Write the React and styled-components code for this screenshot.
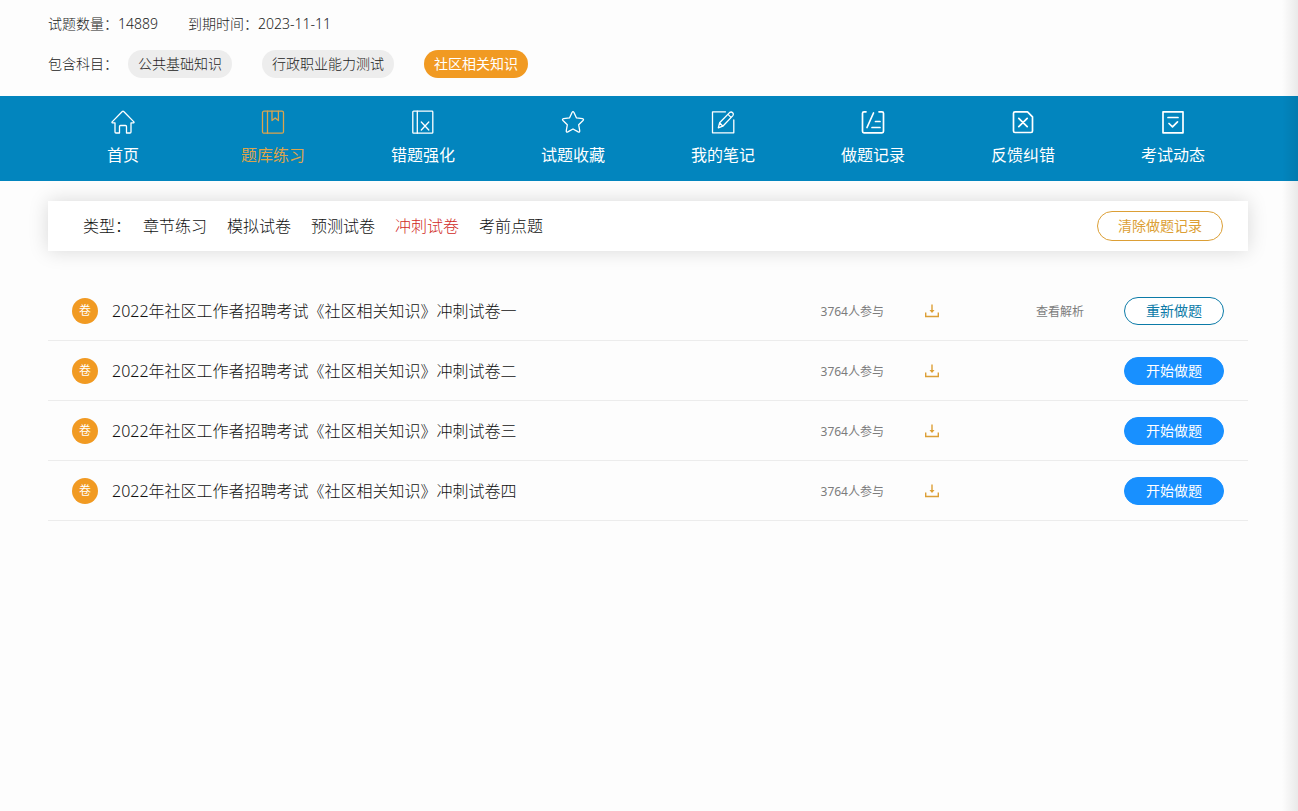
import React from "react";
import styled, { createGlobalStyle, css } from "styled-components";

const COLORS = {
  page: "#fdfdfd",
  text: "#111",
  muted: "#7c7c7c",
  gray: "#ededed",
  line: "#ececec",
  orange: "#f19a22",
  gold: "#dc9f36",
  nav: "#0285be",
  navActive: "#dda44c",
  red: "#d02a26",
  blue: "#1890ff",
  teal: "#0c7ba8",
};

const SUBJECTS = ["公共基础知识", "行政职业能力测试", "社区相关知识"];

const TYPES = ["章节练习", "模拟试卷", "预测试卷", "冲刺试卷", "考前点题"];

const NAV = [
  { id: "home", label: "首页" },
  { id: "book", label: "题库练习" },
  { id: "wrong", label: "错题强化" },
  { id: "star", label: "试题收藏" },
  { id: "note", label: "我的笔记" },
  { id: "record", label: "做题记录" },
  { id: "feedback", label: "反馈纠错" },
  { id: "news", label: "考试动态" },
];

const PAPERS = [
  { no: "一", joined: 3764, done: true },
  { no: "二", joined: 3764, done: false },
  { no: "三", joined: 3764, done: false },
  { no: "四", joined: 3764, done: false },
];

const ICONS = {
  home: (
    <path d="M4 12.800H1.300q-.6-.3-.2-.9L11.300 1.500q.7-.6 1.400 0l10.200 10.400q.4.6-.2.900H20V22q0 1-1 1h-3.500v-6.500q0-1-1-1h-5q-1 0-1 1V23H5q-1 0-1-1Z" />
  ),
  book: (
    <>
      <rect x="1.500" y="1.200" width="21" height="22" rx="1.500" />
      <path d="M6.500 1.200v22M11 1.200v9.300l3.200-2.600 3.200 2.600V1.200" />
    </>
  ),
  wrong: (
    <>
      <rect x="1.800" y="1.200" width="20" height="22" rx=".8" />
      <path d="M6.300 1.200v22M10.300 12l7.500 8M17.800 12l-7.500 8" />
    </>
  ),
  star: (
    <path d="M11 2.500q1-1.700 2 0l2.500 5.400 5.900.8q1.900.4.600 1.800l-4.300 4.300 1 5.900q.2 1.900-1.500 1.200L12 19l-5.200 2.900q-1.700.7-1.500-1.200l1-5.900L2 10.500q-1.300-1.400.6-1.800l5.900-.8Z" />
  ),
  note: (
    <>
      <path d="M14.500 1.800H1.500v21h21.300V10" />
      <path d="m7.300 17.800 1.300-5L18.800 2.400q1.500-1 2.900.3 1.300 1.400.2 2.900L11.800 16.200ZM17 4.400l3 3M8.600 12.800l3.200 3.400" />
    </>
  ),
  record: (
    <path d="M5 1.800H3q-1.500 0-1.500 1.500v18q0 1.500 1.500 1.500h18q1.500 0 1.500-1.500v-18q0-1.500-1.500-1.500h-3M12.500 3 6 17.500M14.500 11.500H19M11 17.500h8" />
  ),
  feedback: (
    <path d="M4 1.800h12.500l5 5V21q0 1.500-1.500 1.500H4q-1.500 0-1.500-1.500V3.300Q2.500 1.800 4 1.800ZM7.800 8.300l8.400 8.400M16.200 8.300l-8.400 8.400" />
  ),
  news: (
    <path d="M2 1.800h20v21H2ZM7 7.500h10M8 13.500l3.500 3.300 5-5" />
  ),
};

// icons that are drawn with a heavier line than the others
const BOLD = ["record", "feedback", "news"];

const NavIcon = ({ id }) => (
  <svg
    width="24"
    height="24"
    viewBox="0 0 24 24"
    fill="none"
    stroke="currentColor"
    strokeWidth={BOLD.includes(id) ? 1.7 : 1.3}
    strokeLinejoin="round"
    strokeLinecap="round"
    aria-hidden="true"
  >
    {ICONS[id]}
  </svg>
);

const DownloadIcon = () => (
  <svg
    width="16"
    height="16"
    viewBox="0 0 16 16"
    fill="none"
    stroke="currentColor"
    strokeWidth="1.4"
    aria-hidden="true"
  >
    <path d="M8 1.500v7M1.700 9.500v4h12.600v-4" />
    <path d="m5.500 7 2.500 3 2.500-3Z" fill="currentColor" stroke="none" />
  </svg>
);

const App = () => {
  const [subject, setSubject] = React.useState("社区相关知识");
  const [type, setType] = React.useState("冲刺试卷");

  return (
    <Page>
      <GlobalStyle />
      <Header>
        <InfoRow>
          <span>试题数量：14889</span>
          <span>到期时间：2023-11-11</span>
        </InfoRow>
        <SubjectRow>
          <SubjectLabel>包含科目：</SubjectLabel>
          <Subjects>
            {SUBJECTS.map((name) => (
              <Subject
                key={name}
                $active={name === subject}
                onClick={() => setSubject(name)}
              >
                {name}
              </Subject>
            ))}
          </Subjects>
        </SubjectRow>
      </Header>

      <Nav>
        {NAV.map(({ id, label }) => (
          <NavLink key={id} href={`#${id}`} $active={id === "book"}>
            <NavIcon id={id} />
            {label}
          </NavLink>
        ))}
      </Nav>

      <Main>
        <FilterBar>
          <span>类型：</span>
          <Types>
            {TYPES.map((name) => (
              <TypeButton
                key={name}
                $active={name === type}
                onClick={() => setType(name)}
              >
                {name}
              </TypeButton>
            ))}
          </Types>
          <ClearButton>清除做题记录</ClearButton>
        </FilterBar>

        <PaperList>
          {PAPERS.map(({ no, joined, done }) => (
            <Paper key={no}>
              <Badge>卷</Badge>
              <Title>2022年社区工作者招聘考试《社区相关知识》冲刺试卷{no}</Title>
              <Note>{joined}人参与</Note>
              <Download aria-label="下载">
                <DownloadIcon />
              </Download>
              <Analysis>{done && <a href="#analysis">查看解析</a>}</Analysis>
              <StartButton $outline={done}>
                {done ? "重新做题" : "开始做题"}
              </StartButton>
            </Paper>
          ))}
        </PaperList>
      </Main>
      <EdgeShade />
    </Page>
  );
};

const GlobalStyle = createGlobalStyle`
  *, *::before, *::after {
    box-sizing: border-box;
  }

  body {
    margin: 0;
    background: ${COLORS.page};
    color: ${COLORS.text};
    font-family: "Noto Sans", "Noto Sans CJK SC", sans-serif;
    font-weight: 300;
    font-size: 16px;
    line-height: 24px;
  }

  button {
    margin: 0;
    padding: 0;
    border: none;
    background: none;
    color: inherit;
    font: inherit;
    cursor: pointer;
  }

  a {
    color: inherit;
    text-decoration: none;
  }
`;

const gutter = css`
  padding-left: 48px;
  padding-right: 50px;
`;

const Page = styled.div`
  position: relative;
  min-height: 100vh;
`;

const Header = styled.header`
  ${gutter}
  padding-top: 10px;
  padding-bottom: 18px;
  font-size: 14px;
  line-height: 28px;
  color: #222;
`;

const InfoRow = styled.div`
  display: flex;
  gap: 30px;
`;

const SubjectRow = styled.div`
  display: flex;
  align-items: center;
  gap: 10px;
  margin-top: 12px;
`;

const SubjectLabel = styled.span`
  flex: none;
`;

const Subjects = styled.div`
  display: flex;
  flex-wrap: wrap;
  gap: 30px;
`;

const Subject = styled.button`
  padding: 0 10px;
  border-radius: 14px;
  background: ${({ $active }) => ($active ? COLORS.orange : COLORS.gray)};
  color: ${({ $active }) => ($active ? "#fff" : "inherit")};
  font-weight: ${({ $active }) => ($active ? 400 : 300)};
`;

const Nav = styled.nav`
  ${gutter}
  display: flex;
  background: ${COLORS.nav};
`;

const NavLink = styled.a`
  flex: 1;
  display: flex;
  flex-direction: column;
  align-items: center;
  gap: 9px;
  padding: 14px 0;
  color: ${({ $active }) => ($active ? COLORS.navActive : "#fff")};
  font-weight: 400;
`;

const Main = styled.main`
  ${gutter}
  padding-top: 20px;
`;

const FilterBar = styled.div`
  display: flex;
  align-items: center;
  gap: 12px;
  height: 50px;
  padding: 0 25px 0 35px;
  background: #fff;
  box-shadow: 0 0 20px rgba(0, 0, 0, 0.15);
`;

const Types = styled.div`
  display: flex;
  gap: 20px;
`;

const TypeButton = styled.button`
  color: ${({ $active }) => ($active ? COLORS.red : "inherit")};
`;

const ClearButton = styled.button`
  width: 126px;
  height: 30px;
  margin-left: auto;
  border: 1px solid ${COLORS.gold};
  border-radius: 15px;
  color: ${COLORS.gold};
  font-size: 14px;
  font-weight: 400;
`;

const PaperList = styled.ul`
  margin: 30px 0 0;
  padding: 0;
  list-style: none;
`;

const Paper = styled.li`
  display: flex;
  align-items: center;
  height: 60px;
  padding: 0 24px;
  border-bottom: 1px solid ${COLORS.line};
`;

const Badge = styled.span`
  flex: none;
  width: 26px;
  margin-right: 14px;
  border-radius: 50%;
  background: ${COLORS.orange};
  color: #fff;
  font-size: 12px;
  font-weight: 400;
  line-height: 26px;
  text-align: center;
`;

const Title = styled.span`
  flex: 1;
`;

const Note = styled.span`
  padding-top: 2px;
  color: ${COLORS.muted};
  font-size: 12px;
  font-weight: 400;
`;

const Download = styled.button`
  display: flex;
  margin-left: 40px;
  color: ${COLORS.gold};
`;

const Analysis = styled(Note)`
  width: 144px;
  margin-right: 40px;
  text-align: right;
`;

const StartButton = styled.button`
  width: 100px;
  height: 28px;
  border: 1px solid ${({ $outline }) => ($outline ? COLORS.teal : COLORS.blue)};
  border-radius: 14px;
  background: ${({ $outline }) => ($outline ? "#fff" : COLORS.blue)};
  color: ${({ $outline }) => ($outline ? COLORS.teal : "#fff")};
  font-size: 14px;
  font-weight: 400;
`;

// soft shade along the right edge of the page
const EdgeShade = styled.div`
  position: absolute;
  top: 0;
  right: 0;
  bottom: 0;
  width: 16px;
  background: linear-gradient(to right, transparent, rgba(0, 0, 0, 0.08));
  pointer-events: none;
`;

export default App;
